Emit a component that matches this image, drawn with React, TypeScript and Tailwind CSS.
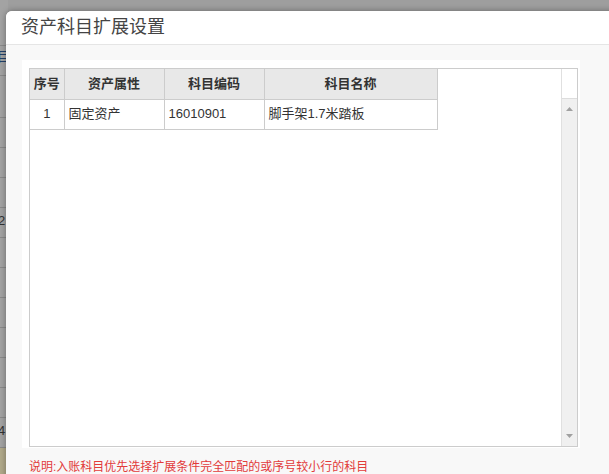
import React from 'react';

const rows = [{ no: '1', type: '固定资产', code: '16010901', name: '脚手架1.7米踏板' }];

const bgLines = [45, 75, 117, 147, 177, 207, 237, 267, 297, 327, 357, 387, 417, 447];

export default function App() {
    return (
        <div
            className="relative w-[609px] h-[474px] overflow-hidden bg-[#9e9e9e]"
            style={{ fontFamily: '"Liberation Sans", "Noto Sans CJK SC", sans-serif' }}
        >
            {/* page behind the dialog */}
            <div className="absolute left-0 top-0 w-[8px] h-full bg-[#a3a3a3]">
                {bgLines.map((y) => (
                    <div key={y} className="absolute left-0 w-full h-px bg-[#8a8a8a]" style={{ top: y }} />
                ))}
                <span className="absolute left-[-3px] top-[50px] text-[13px] leading-none text-[#22426b]">目</span>
                <span className="absolute left-[-2px] top-[214px] text-[13px] leading-none text-[#333]">2</span>
                <span className="absolute left-[-2px] top-[424px] text-[13px] leading-none text-[#333]">4</span>
                <div className="absolute left-0 top-[448px] w-full h-[26px] bg-[#b1a98a]" />
            </div>

            {/* dialog */}
            <div className="absolute left-[6px] top-[11px] w-[620px] h-[480px] bg-[#f8f8f8] rounded-tl-[6px] shadow-[0_0_6px_rgba(0,0,0,0.35)] flex flex-col">
                <div className="h-[34px] bg-white rounded-tl-[6px] border-b border-[#e5e5e5] pl-[15px] flex items-center">
                    <span className="text-[18px] text-[#444]">资产科目扩展设置</span>
                </div>
                <div className="pl-[16px] pt-[15px] w-[574px]">
                    <div className="bg-white pl-[7px] pt-[8px] pr-[2px] pb-[1px]">
                        <div className="h-[379px] border border-[#cccccc] flex">
                            <div className="flex-1">
                                <table className="border-collapse text-[13px] text-[#333]">
                                    <thead>
                                        <tr className="h-[30px] bg-[#e8e8e8]">
                                            <th className="w-[34px] border border-[#cccccc] border-t-0 border-l-0 font-bold">序号</th>
                                            <th className="w-[100px] border border-[#cccccc] border-t-0 font-bold">资产属性</th>
                                            <th className="w-[100px] border border-[#cccccc] border-t-0 font-bold">科目编码</th>
                                            <th className="w-[173px] border border-[#cccccc] border-t-0 font-bold">科目名称</th>
                                        </tr>
                                    </thead>
                                    <tbody>
                                        {rows.map((r) => (
                                            <tr key={r.no} className="h-[30px] bg-white">
                                                <td className="border border-[#cccccc] border-l-0 text-center">{r.no}</td>
                                                <td className="border border-[#cccccc] px-[4px]">{r.type}</td>
                                                <td className="border border-[#cccccc] px-[4px]">{r.code}</td>
                                                <td className="border border-[#cccccc] px-[4px]">{r.name}</td>
                                            </tr>
                                        ))}
                                    </tbody>
                                </table>
                            </div>
                            <div className="w-[16px] flex flex-col border-l border-[#e0e0e0]">
                                <div className="h-[30px] bg-white border-b border-[#dddddd]" />
                                <div className="flex-1 bg-[#f0f0f0] flex flex-col items-center justify-between py-[8px]">
                                    <svg width="7" height="4" viewBox="0 0 7 4"><path d="M0 4 L3.5 0 L7 4 Z" fill="#a0a0a0" /></svg>
                                    <svg width="7" height="4" viewBox="0 0 7 4"><path d="M0 0 L3.5 4 L7 0 Z" fill="#a0a0a0" /></svg>
                                </div>
                            </div>
                        </div>
                    </div>
                    <div className="pl-[7px] pt-[13px] text-[12px] leading-none text-[#e23b3b]">
                        说明:入账科目优先选择扩展条件完全匹配的或序号较小行的科目
                    </div>
                </div>
            </div>
        </div>
    );
}
